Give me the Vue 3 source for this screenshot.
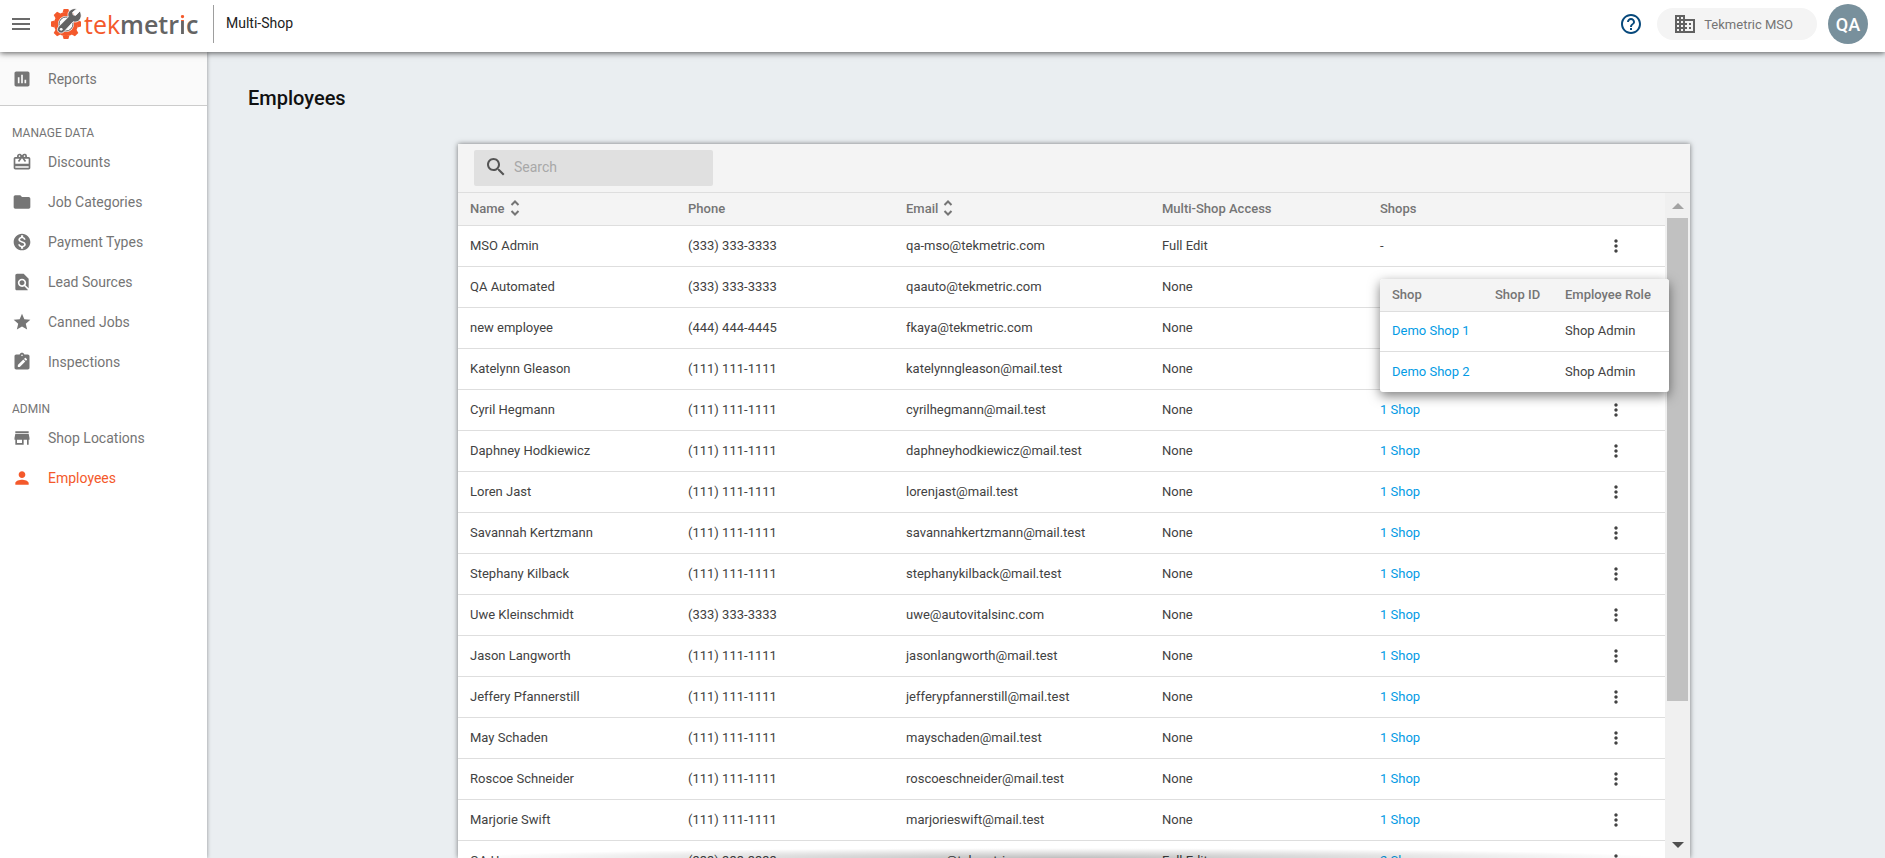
<script setup>
import { ref, computed } from 'vue'

const icons = {
  reports: 'M19 3H5c-1.1 0-2 .9-2 2v14c0 1.1.9 2 2 2h14c1.1 0 2-.9 2-2V5c0-1.1-.9-2-2-2zM9 17H7v-7h2v7zm4 0h-2V7h2v10zm4 0h-2v-4h2v4z',
  gift: 'M20 6h-2.18c.11-.31.18-.65.18-1a2.996 2.996 0 0 0-5.5-1.65l-.5.67-.5-.68C10.96 2.54 10.05 2 9 2 7.34 2 6 3.34 6 5c0 .35.07.69.18 1H4c-1.11 0-1.99.89-1.99 2L2 19c0 1.11.89 2 2 2h16c1.11 0 2-.89 2-2V8c0-1.11-.89-2-2-2zm-5-2c.55 0 1 .45 1 1s-.45 1-1 1-1-.45-1-1 .45-1 1-1zM9 4c.55 0 1 .45 1 1s-.45 1-1 1-1-.45-1-1 .45-1 1-1zm11 15H4v-2h16v2zm0-5H4V8h5.08L7 10.83 8.62 12 11 8.76l1-1.36 1 1.36L15.38 12 17 10.83 14.92 8H20v6z',
  folder: 'M10 4H4c-1.1 0-1.99.9-1.99 2L2 18c0 1.1.9 2 2 2h16c1.1 0 2-.9 2-2V8c0-1.1-.9-2-2-2h-8l-2-2z',
  money: 'M12 2C6.48 2 2 6.48 2 12s4.48 10 10 10 10-4.48 10-10S17.52 2 12 2zm1.41 16.09V20h-2.67v-1.93c-1.71-.36-3.16-1.46-3.27-3.4h1.96c.1 1.05.82 1.87 2.65 1.87 1.96 0 2.4-.98 2.4-1.59 0-.83-.44-1.61-2.67-2.14-2.48-.6-4.18-1.62-4.18-3.67 0-1.72 1.39-2.84 3.11-3.21V4h2.67v1.95c1.86.45 2.79 1.86 2.85 3.39H14.3c-.05-1.11-.64-1.87-2.22-1.87-1.5 0-2.4.68-2.4 1.64 0 .84.65 1.39 2.67 1.91s4.18 1.39 4.18 3.91c-.01 1.83-1.38 2.83-3.12 3.16z',
  find: 'M20 19.59V8l-6-6H6c-1.1 0-1.99.9-1.99 2L4 20c0 1.1.89 2 1.99 2H18c.45 0 .85-.15 1.19-.4l-4.43-4.43c-.8.52-1.74.83-2.76.83-2.76 0-5-2.24-5-5s2.24-5 5-5 5 2.24 5 5c0 1.02-.31 1.96-.83 2.75L20 19.59zM9 13c0 1.66 1.34 3 3 3s3-1.34 3-3-1.34-3-3-3-3 1.34-3 3z',
  star: 'M12 17.27L18.18 21l-1.64-7.03L22 9.24l-7.19-.61L12 2 9.19 8.63 2 9.24l5.46 4.73L5.82 21z',
  inspect: 'M19 3h-4.18C14.4 1.84 13.3 1 12 1s-2.4.84-2.82 2H5c-1.1 0-2 .9-2 2v14c0 1.1.9 2 2 2h14c1.1 0 2-.9 2-2V5c0-1.1-.9-2-2-2zm-7 0c.55 0 1 .45 1 1s-.45 1-1 1-1-.45-1-1 .45-1 1-1zM7 18v-2.3l6.6-6.6 2.3 2.3L9.3 18H7zm9.7-7.4l-2.3-2.3 1.1-1.1c.3-.3.7-.3 1 0l1.3 1.3c.3.3.3.7 0 1l-1.1 1.1z',
  store: 'M20 4H4v2h16V4zm1 10v-2l-1-5H4l-1 5v2h1v6h10v-6h4v6h2v-6h1zm-9 4H6v-4h6v4z',
  person: 'M12 12c2.21 0 4-1.79 4-4s-1.79-4-4-4-4 1.79-4 4 1.79 4 4 4zm0 2c-2.67 0-8 1.34-8 4v2h16v-2c0-2.66-5.33-4-8-4z'
}

const groups = [
  {
    title: 'MANAGE DATA',
    items: [
      { label: 'Discounts', icon: icons.gift },
      { label: 'Job Categories', icon: icons.folder },
      { label: 'Payment Types', icon: icons.money },
      { label: 'Lead Sources', icon: icons.find },
      { label: 'Canned Jobs', icon: icons.star },
      { label: 'Inspections', icon: icons.inspect }
    ]
  },
  {
    title: 'ADMIN',
    items: [
      { label: 'Shop Locations', icon: icons.store },
      { label: 'Employees', icon: icons.person, active: true }
    ]
  }
]

const employees = [
  ['MSO Admin', '(333) 333-3333', 'qa-mso@tekmetric.com', 'Full Edit', ''],
  ['QA Automated', '(333) 333-3333', 'qaauto@tekmetric.com', 'None', '2 Shops'],
  ['new employee', '(444) 444-4445', 'fkaya@tekmetric.com', 'None', '1 Shop'],
  ['Katelynn Gleason', '(111) 111-1111', 'katelynngleason@mail.test', 'None', '1 Shop'],
  ['Cyril Hegmann', '(111) 111-1111', 'cyrilhegmann@mail.test', 'None', '1 Shop'],
  ['Daphney Hodkiewicz', '(111) 111-1111', 'daphneyhodkiewicz@mail.test', 'None', '1 Shop'],
  ['Loren Jast', '(111) 111-1111', 'lorenjast@mail.test', 'None', '1 Shop'],
  ['Savannah Kertzmann', '(111) 111-1111', 'savannahkertzmann@mail.test', 'None', '1 Shop'],
  ['Stephany Kilback', '(111) 111-1111', 'stephanykilback@mail.test', 'None', '1 Shop'],
  ['Uwe Kleinschmidt', '(333) 333-3333', 'uwe@autovitalsinc.com', 'None', '1 Shop'],
  ['Jason Langworth', '(111) 111-1111', 'jasonlangworth@mail.test', 'None', '1 Shop'],
  ['Jeffery Pfannerstill', '(111) 111-1111', 'jefferypfannerstill@mail.test', 'None', '1 Shop'],
  ['May Schaden', '(111) 111-1111', 'mayschaden@mail.test', 'None', '1 Shop'],
  ['Roscoe Schneider', '(111) 111-1111', 'roscoeschneider@mail.test', 'None', '1 Shop'],
  ['Marjorie Swift', '(111) 111-1111', 'marjorieswift@mail.test', 'None', '1 Shop'],
  ['QA User', '(333) 333-3333', 'qauser@tekmetric.com', 'Full Edit', '2 Shops']
].map(([name, phone, email, access, shops]) => ({ name, phone, email, access, shops }))

const openShops = ref('QA Automated')
const demoShops = ['Demo Shop 1', 'Demo Shop 2']

const query = ref('')
const visible = computed(() =>
  employees.filter((e) => e.name.toLowerCase().includes(query.value.toLowerCase()))
)
const teeth = [0, 45, 90, 135, 180, 225, 270, 315]
</script>

<template>
  <div class="app">
    <header class="topbar">
      <button class="icon-btn menu" type="button" aria-label="Menu">
        <svg viewBox="0 0 24 24"><path d="M3 18h18v-2H3v2zm0-5h18v-2H3v2zm0-7v2h18V6H3z" /></svg>
      </button>
      <a class="logo" href="#" aria-label="tekmetric">
        <svg class="gear" viewBox="0 0 32 32">
          <g fill="#f4592b">
            <path v-for="a in teeth" :key="a" d="M12.600 4.600L13.600 1h4.800l1 3.600z" :transform="`rotate(${a} 16 16)`" />
          </g>
          <circle cx="16" cy="16" r="10" fill="none" stroke="#f4592b" stroke-width="4" />
          <circle cx="16" cy="16" r="7" fill="none" stroke="#646464" stroke-width="1" />
          <path d="M21 0h11v12h-6z" fill="#fff" />
          <path
            d="M29.800 3.200l-4.100 4.200-2.600-.6-.5-2.500 4-3.300c-3-1-6.500.2-8 3.100-.8 1.600-.8 3.300-.3 4.800L8.700 18.500c-1.700 1.700-1.700 4 -.2 5.500s3.900 1.400 5.500-.3l9.200-10c1.600.6 3.700.4 5.300-.7 2.900-2 3.600-6.500 1.300-9.800z"
            fill="#646464" stroke="#fff" stroke-width=".8"
          />
          <circle cx="11.200" cy="21.300" r="1.400" fill="#fff" />
        </svg>
        <span class="wordmark"><span class="tek">tek</span><span class="metric">metr<span class="i">i</span>c</span></span>
      </a>
      <span class="section">Multi-Shop</span>
      <div class="tools">
        <button class="icon-btn help" type="button" aria-label="Help">
          <svg viewBox="0 0 24 24"><path d="M11 18h2v-2h-2v2zm1-16C6.480 2 2 6.480 2 12s4.480 10 10 10 10-4.480 10-10S17.520 2 12 2zm0 18c-4.410 0-8-3.590-8-8s3.590-8 8-8 8 3.590 8 8-3.590 8-8 8zm0-14c-2.210 0-4 1.790-4 4h2c0-1.100.9-2 2-2s2 .9 2 2c0 2-3 1.750-3 5h2c0-2.250 3-2.500 3-5 0-2.210-1.790-4-4-4z" /></svg>
        </button>
        <button class="org" type="button">
          <svg viewBox="0 0 24 24"><path d="M12 7V3H2v18h20V7H12zM6 19H4v-2h2v2zm0-4H4v-2h2v2zm0-4H4V9h2v2zm0-4H4V5h2v2zm4 12H8v-2h2v2zm0-4H8v-2h2v2zm0-4H8V9h2v2zm0-4H8V5h2v2zm10 12h-8v-2h2v-2h-2v-2h2v-2h-2V9h8v10zm-2-8h-2v2h2v-2zm0 4h-2v2h2v-2z" /></svg>
          Tekmetric MSO
        </button>
        <button class="avatar" type="button">QA</button>
      </div>
    </header>

    <div class="body">
      <nav class="sidebar">
        <a class="nav-item reports" href="#">
          <svg viewBox="0 0 24 24"><path :d="icons.reports" /></svg>Reports
        </a>
        <section v-for="g in groups" :key="g.title" class="group">
          <h2>{{ g.title }}</h2>
          <a v-for="i in g.items" :key="i.label" href="#" class="nav-item" :class="{ active: i.active }">
            <svg viewBox="0 0 24 24"><path :d="i.icon" /></svg>{{ i.label }}
          </a>
        </section>
      </nav>

      <main class="main">
        <h1>Employees</h1>
        <div class="card">
          <div class="toolbar">
            <label class="search">
              <svg viewBox="0 0 24 24"><path d="M15.500 14h-.79l-.28-.27C15.410 12.590 16 11.110 16 9.500 16 5.910 13.090 3 9.500 3S3 5.910 3 9.500 5.910 16 9.500 16c1.610 0 3.090-.59 4.230-1.570l.27.28v.79l5 4.990L20.490 19l-4.990-5zm-6 0C7.010 14 5 11.990 5 9.500S7.010 5 9.500 5 14 7.010 14 9.500 11.990 14 9.500 14z" /></svg>
              <input v-model="query" type="text" placeholder="Search" aria-label="Search" />
            </label>
          </div>
          <div class="scroller">
            <div class="table-wrap">
              <table class="employees">
                <colgroup>
                  <col class="c-name" /><col class="c-phone" /><col class="c-email" />
                  <col class="c-access" /><col class="c-shops" /><col class="c-actions" />
                </colgroup>
                <thead>
                  <tr>
                    <th>
                      <button class="sort" type="button">Name
                        <svg viewBox="0 0 10 16"><path d="M1.500 5L5 1.500 8.500 5M1.500 11L5 14.500 8.500 11" /></svg>
                      </button>
                    </th>
                    <th>Phone</th>
                    <th>
                      <button class="sort" type="button">Email
                        <svg viewBox="0 0 10 16"><path d="M1.500 5L5 1.500 8.500 5M1.500 11L5 14.500 8.500 11" /></svg>
                      </button>
                    </th>
                    <th>Multi-Shop Access</th>
                    <th>Shops</th>
                    <th></th>
                  </tr>
                </thead>
                <tbody>
                  <tr v-for="e in visible" :key="e.name">
                    <td>{{ e.name }}</td>
                    <td>{{ e.phone }}</td>
                    <td>{{ e.email }}</td>
                    <td>{{ e.access }}</td>
                    <td class="shops">
                      <a v-if="e.shops" href="#" @click.prevent="openShops = e.name">{{ e.shops }}</a>
                      <template v-else>-</template>
                      <div v-if="openShops === e.name" class="popover">
                        <table>
                          <colgroup>
                            <col class="p-shop" /><col class="p-id" /><col />
                          </colgroup>
                          <thead>
                            <tr><th>Shop</th><th>Shop ID</th><th>Employee Role</th></tr>
                          </thead>
                          <tbody>
                            <tr v-for="s in demoShops" :key="s">
                              <td><a href="#">{{ s }}</a></td>
                              <td></td>
                              <td>Shop Admin</td>
                            </tr>
                          </tbody>
                        </table>
                      </div>
                    </td>
                    <td class="actions">
                      <button class="more" type="button" :aria-label="`Actions for ${e.name}`">
                        <svg viewBox="0 0 24 24"><path d="M12 8c1.100 0 2-.9 2-2s-.9-2-2-2-2 .9-2 2 .9 2 2 2zm0 2c-1.100 0-2 .9-2 2s.9 2 2 2 2-.9 2-2-.9-2-2-2zm0 6c-1.100 0-2 .9-2 2s.9 2 2 2 2-.9 2-2-.9-2-2-2z" /></svg>
                      </button>
                    </td>
                  </tr>
                </tbody>
              </table>
            </div>
            <div class="scrollbar" aria-hidden="true">
              <svg class="arrow up" viewBox="0 0 12 6"><path d="M6 0l6 6H0z" /></svg>
              <div class="track"><div class="thumb"></div></div>
              <svg class="arrow down" viewBox="0 0 12 6"><path d="M0 0h12L6 6z" /></svg>
            </div>
            <div class="fade"></div>
          </div>
        </div>
      </main>
    </div>
  </div>
</template>

<style>
html,
body {
  margin: 0;
  overflow: hidden;
}
</style>

<style scoped>
.app {
  display: flex;
  flex-direction: column;
  height: 100vh;
  font-family: Roboto, "Liberation Sans", sans-serif;
  font-size: 13px;
  color: #424242;
}
.app *,
.app *::before {
  box-sizing: border-box;
}
button,
input {
  font: inherit;
  color: inherit;
  background: none;
  border: 0;
  padding: 0;
  margin: 0;
}
button {
  cursor: pointer;
}
a {
  color: #039be5;
  text-decoration: none;
}
svg {
  display: block;
  flex: none;
  fill: currentColor;
}

.topbar {
  display: flex;
  align-items: center;
  height: 52px;
  flex: none;
  padding: 0 17px 4px 9px;
  background: #fff;
  box-shadow: 0 1px 6px rgba(0, 0, 0, 0.65);
  z-index: 3;
}
.icon-btn svg {
  width: 24px;
  height: 24px;
}
.menu {
  color: #6b6b6b;
}
.logo {
  display: flex;
  align-items: center;
  width: 150px;
  margin-left: 17px;
}
.gear {
  width: 32px;
  height: 32px;
}
.wordmark {
  margin-left: 2px;
  font: 25px/32px "Open Sans", "Noto Sans", sans-serif;
  white-space: nowrap;
}
.tek {
  color: #f4592b;
}
.metric {
  color: #646464;
  font-weight: 600;
}
.metric .i {
  color: transparent;
  background: linear-gradient(#f4592b 40%, #646464 40%);
  background-clip: text;
}
.section {
  display: flex;
  align-items: center;
  height: 38px;
  margin-left: 13px;
  padding: 0 0 2px 12px;
  border-left: 1px solid #9e9e9e;
  font-size: 14px;
  color: #212121;
}
.tools {
  display: flex;
  align-items: center;
  margin-left: auto;
}
.help {
  color: #07497c;
  margin-right: 14px;
}
.org {
  display: flex;
  align-items: center;
  gap: 7px;
  height: 32px;
  padding: 0 24px 0 16px;
  border-radius: 16px;
  background: #f4f4f4;
  color: #757575;
  white-space: nowrap;
}
.org svg {
  width: 24px;
  height: 24px;
  color: #616161;
}
.avatar {
  width: 40px;
  height: 40px;
  margin-left: 11px;
  border-radius: 50%;
  background: #78909c;
  color: #fff;
  font-size: 18px;
  font-weight: 500;
}

.body {
  display: flex;
  flex: 1;
  min-height: 0;
}
.sidebar {
  width: 207px;
  flex: none;
  background: #fff;
  box-shadow: 0 0 4px rgba(0, 0, 0, 0.4);
  z-index: 2;
}
.nav-item {
  display: flex;
  align-items: center;
  gap: 16px;
  height: 40px;
  padding-left: 12px;
  font-size: 14px;
  color: #757575;
}
.nav-item svg {
  width: 20px;
  height: 20px;
}
.nav-item.active {
  color: #f4592b;
}
.nav-item.reports {
  height: 54px;
  background: #fafafa;
  border-bottom: 1px solid #ccc;
}
.group {
  padding-top: 19px;
}
.group h2 {
  margin: 0 0 1px;
  padding-left: 12px;
  font-size: 12px;
  line-height: 16px;
  font-weight: 400;
  color: #757575;
}

.main {
  display: flex;
  flex-direction: column;
  flex: 1;
  min-width: 0;
  padding: 34px 195px 0 41px;
  background: #eaeef1;
}
h1 {
  margin: 0 0 34px;
  font-size: 20px;
  line-height: 24px;
  font-weight: 500;
  color: #111;
}
.card {
  display: flex;
  flex-direction: column;
  flex: 1;
  min-height: 0;
  margin-left: 210px;
  background: #fff;
  box-shadow: 0 0 5px rgba(0, 0, 0, 0.5);
}
.toolbar {
  flex: none;
  padding: 6px 16px;
  background: #f4f4f4;
  border-bottom: 1px solid #dedede;
}
.search {
  display: flex;
  align-items: center;
  gap: 6px;
  width: 239px;
  height: 36px;
  padding: 0 10px 2px;
  border-radius: 2px;
  background: #e0e0e0;
}
.search svg {
  width: 24px;
  height: 24px;
  color: #555;
}
.search input {
  flex: 1;
  min-width: 0;
  font-size: 14px;
  outline: 0;
}
.search input::placeholder {
  color: #a8a8a8;
}
.scroller {
  position: relative;
  display: flex;
  flex: 1;
  min-height: 0;
}
.table-wrap {
  flex: 1;
  min-width: 0;
}
table {
  width: 100%;
  border-collapse: separate;
  border-spacing: 0;
  table-layout: fixed;
}
th,
td {
  padding: 0 0 2px 12px;
  text-align: left;
  white-space: nowrap;
  border-bottom: 1px solid #dedede;
}
th {
  height: 33px;
  font-weight: 500;
  color: #757575;
  background: #f4f4f4;
}
.employees td {
  height: 41px;
}
.employees td.actions {
  padding-bottom: 0;
}
.c-name,
.c-phone,
.c-access,
.c-shops {
  width: 218px;
}
.c-email {
  width: 256px;
}
.c-actions {
  width: 79px;
}
.sort {
  display: flex;
  align-items: center;
  gap: 5px;
}
.sort svg {
  width: 10px;
  height: 16px;
  fill: none;
  stroke: currentColor;
  stroke-width: 2;
}
.more {
  display: flex;
  align-items: center;
  justify-content: center;
  width: 36px;
  height: 36px;
}
.more svg {
  width: 20px;
  height: 20px;
}
.shops {
  position: relative;
}
.popover {
  position: absolute;
  top: 12px;
  left: 12px;
  z-index: 2;
  width: 289px;
  overflow: hidden;
  border-radius: 3px;
  background: #fff;
  box-shadow: 0 4px 12px rgba(0, 0, 0, 0.5);
}
.p-shop {
  width: 103px;
}
.p-id {
  width: 70px;
}
.employees .popover td {
  height: 40px;
}
.popover tr:last-child td {
  border-bottom: 0;
}
.scrollbar {
  display: flex;
  flex-direction: column;
  align-items: center;
  width: 25px;
  flex: none;
  padding: 10px 0;
  background: #f0f0f0;
}
.arrow {
  width: 12px;
  height: 6px;
  color: #505050;
}
.arrow.up {
  color: #a3a3a3;
}
.track {
  flex: 1;
  width: 21px;
  padding: 9px 0;
}
.thumb {
  height: 78.5%;
  background: #c1c1c1;
}
.fade {
  position: absolute;
  left: 0;
  right: 25px;
  bottom: 0;
  height: 10px;
  background: radial-gradient(farthest-side at 50% 100%, rgba(0, 0, 0, 0.25), transparent);
  pointer-events: none;
}
</style>
